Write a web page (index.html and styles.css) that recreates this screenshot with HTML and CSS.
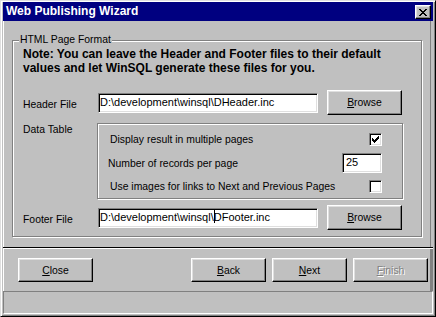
FILE: index.html
```html
<!DOCTYPE html>
<html lang="en">
  <head>
    <meta charset="utf-8" />
    <title>Web Publishing Wizard</title>
    <link rel="stylesheet" href="styles.css">
  </head>
  <body>
    <div class="window">
      <div class="titlebar">
        <span class="title">Web Publishing Wizard</span>
        <button class="close-btn" aria-label="Close">
          <svg width="8" height="7" viewBox="0 0 8 7">
            <path d="M0 0h2v1h1v1h2v-1h1v-1h2v1h-1v1h-1v1h-1v1h1v1h1v1h1v1h-2v-1h-1v-1h-2v1h-1v1h-2v-1h1v-1h1v-1h1v-1h-1v-1h-1v-1h-1z" fill="#000"/>
          </svg>
        </button>
      </div>

      <div class="main-panel">
        <div class="groupbox">
          <span class="group-title">HTML Page Format</span>
          <p class="note">Note: You can leave the Header and Footer files to their default<br>values and let WinSQL generate these files for you.</p>

          <div class="form-grid">
            <span class="label">Header File</span>
            <div class="field">D:\development\winsql\DHeader.inc</div>
            <button class="btn"><u>B</u>rowse</button>

            <span class="label label-top">Data Table</span>
            <div class="data-box">
              <div class="opt-row">
                <span>Display result in multiple pages</span>
                <span class="checkbox">
                  <svg width="7" height="7" viewBox="0 0 7 7">
                    <path d="M6 0h1v3h-1v1h-1v1h-1v1h-1v1h-1v-1h-1v-1h-1v-3h1v1h1v1h1v-1h1v-1h1v-1h1z" fill="#000"/>
                  </svg>
                </span>
              </div>
              <div class="opt-row opt-row-num">
                <span>Number of records per page</span>
                <div class="field field-num">25</div>
              </div>
              <div class="opt-row opt-row-last">
                <span>Use images for links to Next and Previous Pages</span>
                <span class="checkbox"></span>
              </div>
            </div>

            <span class="label">Footer File</span>
            <div class="field">D:\development\winsql\<span class="caret"></span>DFooter.inc</div>
            <button class="btn"><u>B</u>rowse</button>
          </div>
        </div>
      </div>

      <div class="button-panel">
        <button class="btn"><u>C</u>lose</button>
        <button class="btn btn-back"><u>B</u>ack</button>
        <button class="btn"><u>N</u>ext</button>
        <button class="btn" disabled><u>F</u>inish</button>
      </div>

      <div class="status-bar"></div>
    </div>
  </body>
</html>
```

FILE: styles.css
```css
body,
html {
  margin: 0;
  padding: 0;
  background: #c0c0c0;
  font-family: "Liberation Sans", Arial, sans-serif;
  font-size: 10.4px;
  color: #000;
}

.window {
  box-sizing: border-box;
  width: 436px;
  height: 317px;
  padding: 1px 2px;
  background: #c0c0c0;
  border: 1px solid;
  border-color: #dfdfdf #000 #000 #dfdfdf;
  box-shadow: inset 1px 1px #fff, inset -1px -1px #808080;
  display: flex;
  flex-direction: column;
}

/* title bar */
.titlebar {
  height: 19px;
  background: #000080;
  display: flex;
  align-items: flex-start;
  justify-content: space-between;
  flex-shrink: 0;
}

.title {
  padding-left: 3px;
  font-weight: 700;
  font-size: 12px;
  line-height: 19px;
  color: #fff;
}

.close-btn {
  box-sizing: border-box;
  width: 16px;
  height: 14px;
  margin: 3px 2px 0 0;
  padding: 0;
  background: #c0c0c0;
  border: 1px solid;
  border-color: #fff #000 #000 #fff;
  box-shadow: inset -1px -1px #808080, inset 1px 1px #dfdfdf;
  display: flex;
  align-items: center;
  justify-content: center;
}

.close-btn svg {
  display: block;
}

/* main area */
.main-panel {
  box-sizing: border-box;
  height: 227px;
  flex-shrink: 0;
  border-bottom: 1px solid #000;
  box-shadow: inset 1px 0 #fff, inset -2px 0 #c0c0c0, inset -3px 0 #808080;
  padding-top: 19px;
  padding-left: 9px;
}

.groupbox {
  position: relative;
  box-sizing: border-box;
  width: 410px;
  height: 197px;
  padding: 6px 10px 0;
  border: 1px solid #808080;
  box-shadow: inset 1px 1px #fff, 1px 1px #fff;
}

.group-title {
  position: absolute;
  top: -8px;
  left: 6px;
  padding: 0 1px;
  line-height: 13px;
  background: #c0c0c0;
}

.note {
  margin: 0;
  font-weight: 700;
  font-size: 12px;
  line-height: 14px;
  white-space: nowrap;
}

.form-grid {
  margin-top: 15px;
  display: grid;
  grid-template-columns: 66px 220px 75px;
  grid-template-rows: 25px 78px 25px;
  column-gap: 9px;
  row-gap: 6px;
}

.label {
  align-self: center;
  margin-top: 4px;
  line-height: 13px;
}

.label-top {
  align-self: start;
  margin-top: 2px;
}

.field {
  box-sizing: border-box;
  height: 20px;
  align-self: center;
  padding: 0 1px;
  font-size: 11px;
  line-height: 16px;
  white-space: nowrap;
  overflow: hidden;
  background: #fff;
  border: 1px solid;
  border-color: #808080 #fff #fff #808080;
  box-shadow: inset 1px 1px #000, inset -1px -1px #dfdfdf;
}

.caret {
  display: inline-block;
  width: 1px;
  height: 13px;
  margin-right: -1px;
  vertical-align: -2px;
  background: #000;
}

.btn {
  box-sizing: border-box;
  width: 75px;
  height: 25px;
  padding: 0;
  background: #c0c0c0;
  font-family: inherit;
  font-size: 10.4px;
  color: #000;
  border: 1px solid;
  border-color: #fff #000 #000 #fff;
  box-shadow: inset -1px -1px #808080, inset 1px 1px #dfdfdf;
}

.btn:disabled {
  color: #808080;
  text-shadow: 1px 1px #fff;
}

/* data table options */
.data-box {
  grid-column: 2 / 4;
  box-sizing: border-box;
  height: 76px;
  margin: 2px -1px 0;
  padding: 5px 20px 2px 12px;
  border: 1px solid #808080;
  box-shadow: inset 1px 1px #fff, 1px 1px #fff;
  display: flex;
  flex-direction: column;
}

.opt-row {
  height: 20px;
  display: flex;
  align-items: center;
  justify-content: space-between;
  line-height: 13px;
}

.opt-row-num {
  margin: 4px 0 0 -2px;
}

.opt-row-last {
  margin-top: 3px;
}

.field-num {
  width: 40px;
  padding-left: 3px;
}

.checkbox {
  box-sizing: border-box;
  width: 13px;
  height: 13px;
  background: #fff;
  border: 1px solid;
  border-color: #808080 #fff #fff #808080;
  box-shadow: inset 1px 1px #000, inset -1px -1px #dfdfdf;
  display: flex;
  align-items: center;
  justify-content: center;
}

/* bottom buttons */
.button-panel {
  box-sizing: border-box;
  height: 43px;
  flex-shrink: 0;
  padding: 10px 5px 0 15px;
  display: flex;
  align-items: flex-start;
  gap: 6px;
  box-shadow: inset 1px 1px #fff, inset -3px 0 #808080;
}

.button-panel .btn {
  height: 24px;
}

.btn-back {
  margin-left: auto;
}

.status-bar {
  box-sizing: border-box;
  height: 23px;
  flex-shrink: 0;
  border: 1px solid;
  border-color: #808080 #fff #fff #808080;
}
```
